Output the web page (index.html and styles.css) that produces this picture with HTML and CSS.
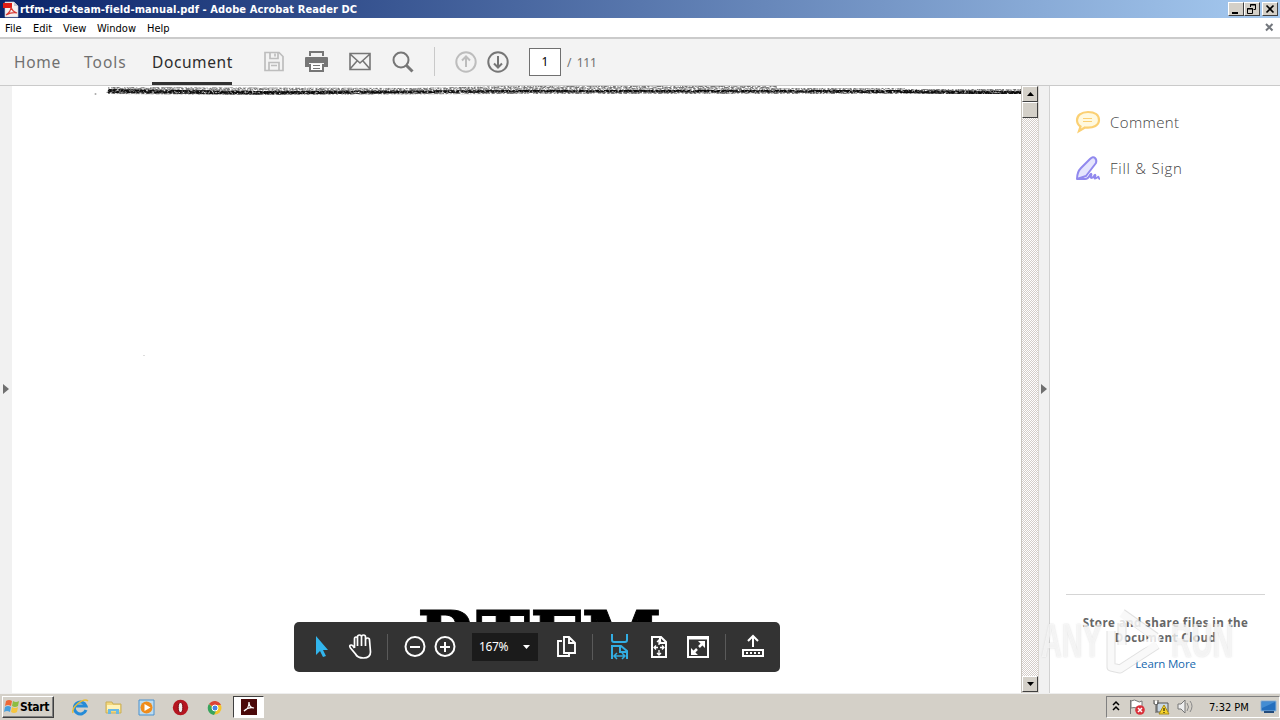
FILE: index.html
```html
<!DOCTYPE html>
<html lang="en">
<head>
<meta charset="utf-8">
<title>rtfm-red-team-field-manual.pdf - Adobe Acrobat Reader DC</title>
<link rel="stylesheet" href="styles.css">
</head>
<body>
<div class="screen">
  <header class="titlebar">
    <svg class="app-icon" width="18" height="17" viewBox="0 0 18 17"><path d="M4 1h9l4 4v11H4z" fill="#f4f0f0" stroke="#c9c9d4" stroke-width=".6"/><path d="M13 1v4h4z" fill="#c8c8d0"/><path d="M2 2h9v5H2z" fill="#e01d16"/><path d="M5 14c3-2 5-5 5-8 1 4 3 5 6 6-4-1-7 0-11 2z" fill="none" stroke="#d93a33" stroke-width="1.2"/></svg>
    <h1 class="title-text">rtfm-red-team-field-manual.pdf - Adobe Acrobat Reader DC</h1>
    <div class="window-buttons">
      <span class="win-btn"><svg width="14" height="12"><path d="M3 9h6v2H3z"/></svg></span>
      <span class="win-btn"><svg width="14" height="12"><path d="M5.500 4V1.500h5v5H8.500M5 2h6M2.500 5.500h5v5h-5zM2 6h6" fill="none" stroke="#000"/></svg></span>
      <span class="win-btn win-close"><svg width="14" height="12"><path d="M3.500 2.500l7 7M10.500 2.500l-7 7" stroke="#000" stroke-width="1.700"/></svg></span>
    </div>
  </header>
  <nav class="menubar">
    <span class="menu m-file">File</span><span class="menu m-edit">Edit</span><span class="menu m-view">View</span><span class="menu m-window">Window</span><span class="menu m-help">Help</span>
    <svg class="doc-close" width="9" height="9"><path d="M1 1l6.500 6.500M7.500 1L1 7.500" stroke="#73777d" stroke-width="2"/></svg>
  </nav>
  <div class="toolbar">
    <span class="tab t-home">Home</span><span class="tab t-tools">Tools</span><span class="tab t-doc">Document</span>
    <svg class="tools" width="250" height="44" viewBox="0 0 250 44" fill="none" stroke="#767676" stroke-width="2">
      <g stroke="#bdbdbd" stroke-width="1.700" transform="translate(2 -.5)"><path d="M3 13h14l4 4v14H3z"/><path d="M8 13v6h8v-6M13 14v3M7 31v-8h10v8M9 26h6"/></g>
      <g stroke="none"><path d="M49 11h15v5H49zM46 17h21q1 0 1 1v9h-4v-4H49v4h-4v-9q0-1 1-1z" fill="#767676"/><path d="M51 13h11v4H51z" fill="#f3f3f3"/><path d="M49 17h15v2H49zM49 24h15v8H49z" fill="#767676"/><path d="M51 24h11v6H51z" fill="#fff"/></g>
      <path d="M53 25.500h7M53 28.500h7" stroke-width="1"/>
      <path d="M90 13.500h20v16H90zM90 14l10 9 10-9M90 29l7-8M110 29l-7-8" stroke-width="1.600"/>
      <circle cx="141" cy="20" r="7.500"/><path d="M146.500 25.500l6 6" stroke-width="3"/>
      <path d="M174.500 7v29" stroke="#c9c9c9" stroke-width="1"/>
      <g stroke="#bdbdbd"><circle cx="206" cy="22" r="9.700"/><path d="M206 27V17M202 20.500l4-4 4 4"/></g>
      <circle cx="238" cy="22" r="9.700"/><path d="M238 16v11M234 23.500l4 4 4-4"/>
    </svg>
    <span class="page-input">1</span><span class="page-total">/&nbsp; 111</span>
  </div>
  <main class="workspace">
    <div class="left-rail"><svg width="8" height="12"><path d="M1 1l6 5-6 5z" fill="#707070"/></svg></div>
    <section class="document">
      <svg class="scan-edge" width="1009" height="12" viewBox="0 0 1009 12">
        <defs>
          <filter id="grain" x="0" y="0" width="1009" height="12" filterUnits="userSpaceOnUse"><feTurbulence type="fractalNoise" baseFrequency=".4 .5" numOctaves="3" seed="7"/><feColorMatrix values="0 0 0 0 0 0 0 0 0 0 0 0 0 0 0 3 0 0 0 -.7" result="n"/><feComposite in="SourceGraphic" in2="n" operator="in"/></filter>
          <filter id="grain-light" x="0" y="0" width="1009" height="12" filterUnits="userSpaceOnUse"><feTurbulence type="fractalNoise" baseFrequency=".5 .7" numOctaves="2" seed="3"/><feColorMatrix values="0 0 0 0 0 0 0 0 0 0 0 0 0 0 0 3 0 0 0 -.9" result="n"/><feComposite in="SourceGraphic" in2="n" operator="in"/></filter>
        </defs>
        <path d="M96 1L400 2 500 0H765V2H893V3L1009 3V8L890 8 500 8 245 9 96 8z" fill="#777" filter="url(#grain-light)"/>
        <path d="M97 3L245 5 500 4 760 4 893 4 1009 5V8L960 8 890 7 760 6.500 500 6.500 250 8.500 94 7z" fill="#080808" filter="url(#grain)"/>
        <circle cx="83.500" cy="8" r="1" fill="#aaa"/>
      </svg>
      <div class="cover-word">RTFM</div>
      <i class="speck"></i>
    </section>
    <div class="scrollbar"><span class="scroll-btn"><svg width="7" height="4"><path d="M0 4L3.500 0 7 4z"/></svg></span><span class="thumb"></span><span class="track"></span><span class="scroll-btn"><svg width="7" height="4"><path d="M0 0h7L3.500 4z"/></svg></span></div>
    <div class="right-rail"><svg width="8" height="12"><path d="M1 1l6 5-6 5z" fill="#707070"/></svg></div>
    <aside class="panel">
      <div class="action">
        <svg width="26" height="24" viewBox="0 0 26 24" fill="#fff9df" stroke="#fbd073" stroke-width="2.200"><path d="M13 2C6 2 2 5.500 2 10c0 3 1 5 3.500 6.500L4 21l6-3.500c9 1 14-2.500 14-7.500S20 2 13 2z"/><path d="M8 8.500h9M8 11.500h9" stroke-width="1"/></svg>
        <span>Comment</span>
      </div>
      <div class="action action-sign">
        <svg width="26" height="26" viewBox="0 0 26 26" fill="#e5e5fd" stroke="#9189ee" stroke-width="2" stroke-linejoin="round"><path d="M2 24q0-7 4-11l9-9q3-3 5-1t1 5L11 21z"/><path d="M2 24h8q3 0 5-4c1-2 2-1 1 1s1 3 3 0c1-2 2-1 1 1s0 2 3 0c1-1 0 2 2 2" fill="none"/></svg>
        <span class="sign-text">Fill &amp; Sign</span>
      </div>
      <div class="cloud"><p class="cloud-line line-one">Store and share files in the</p><p class="cloud-line line-two">Document Cloud</p><a class="learn">Learn More</a></div>
    </aside>
    <div class="dock">
      <svg width="178" height="50" viewBox="0 0 178 50" fill="none" stroke="#fff" stroke-width="2">
        <path d="M22 14v19l4-4 3 6 3-1-3-6h5z" fill="#32b5ed" stroke="none"/>
        <path d="M60 27v-9q0-2 1.500-2T63 18v7-9q0-2 2-2t2 2v9-9q0-2 2-2t2 2v9-6q0-2 2-2t2 2l1 12q0 6-7 6-6 0-8-4l-5-6q-2-3 1-3 1 0 3 3" transform="translate(.5 -1)" stroke-width="1.700"/>
        <path d="M93.500 12v26" stroke="#5a5a5a" stroke-width="1"/>
        <circle cx="121" cy="24.500" r="9.500"/><path d="M116 25h10"/><circle cx="151" cy="24.500" r="9.500"/><path d="M146 25h10M151 20v10"/>
      </svg>
      <span class="zoom-box"><span class="zoom-text">167%</span><svg width="7" height="4"><path d="M0 0h7L3.500 4z" fill="#fff"/></svg></span>
      <svg width="242" height="50" viewBox="0 0 242 50" fill="none" stroke="#fff" stroke-width="2">
        <path d="M26 15h5l6 6v10H26zM31 15v6h6M24 19h-4v15h11v-3" stroke-width="1.900"/>
        <path d="M54.500 12v26M187.500 12v26" stroke="#5a5a5a" stroke-width="1"/>
        <g stroke="#32aee3"><path d="M74 12v6q0 2 2 2h11q2 0 2-2v-6M74 37V24h9l6 5v8M82 24v6h7"/><path d="M76 34h11M79 31l-3 3 3 3M84 31l3 3-3 3" stroke-width="1.500"/></g>
        <path d="M114 15h9l5 5v15h-14zM122 15v6h6"/><path d="M121 18v5M121 28v5M116 25.500h4M122 25.500h4M119 20l2-2 2 2M119 31l2 2 2-2M118 23.500l-2 2 2 2M124 23.500l2 2-2 2" stroke-width="1.300"/>
        <path d="M150 15h20v20h-20z"/><path d="M150 16h20" stroke-width="3"/><path d="M161 25l5-5M159 27l-5 5" stroke-width="2.500"/><path d="M160 19h7v7zM153 26v7h7z" fill="#fff" stroke="none"/>
        <path d="M205 28h20v6h-20zM215 25V15M210 19l5-5 5 5"/><path d="M208 31h14" stroke-dasharray="2 2"/>
      </svg>
    </div>
    <div class="watermark"><span class="wm wm-any">ANY</span><svg width="62" height="66" viewBox="0 0 62 66" fill="none" stroke-linejoin="round"><g stroke="#b5b5b5" stroke-opacity=".4" stroke-width="9"><path d="M8 23v36l9 2 37-24M19 15v22M19 5l34 24"/></g><path d="M8 23v36l9 2 37-24M19 15v22M19 5l34 24M19 5v40l35-14z" stroke="#fff" stroke-opacity=".8" stroke-width="7"/></svg><span class="wm wm-run">RUN</span></div>
  </main>
  <footer class="taskbar">
    <div class="start"><svg width="17" height="17" viewBox="0 0 17 17"><path d="M3 3q3-2 6 0L8 8q-3-2-6 0z" fill="#ee6937"/><path d="M10 3q3 2 6 0l-1 5q-3 2-6 0z" fill="#8dbd42"/><path d="M2 9q3-2 6 0l-1 5q-3-2-6 0z" fill="#48a0de"/><path d="M9 9q3 2 6 0l-1 5q-3 2-6 0z" fill="#f6c53e"/></svg><b>Start</b></div>
    <svg class="quick" width="160" height="22" viewBox="0 0 160 22">
      <g fill="none" transform="translate(4 2)"><path d="M14 12A6 6 0 1 1 14 8H4" stroke="#258bd7" stroke-width="3"/><path d="M1 15C-1 9 12-1 16 3" stroke="#e9bd37" stroke-width="1.500"/></g>
      <g transform="translate(37 3)"><path d="M1 3h6l1 2h8v9H1z" fill="#f3d77b" stroke="#c9ae59"/><path d="M2 6h13v5H2z" fill="#fff3b8"/><path d="M3 15v-5h11v5h-3v-3H6v3z" fill="#69b9e3"/></g>
      <g transform="translate(70 3)"><path d="M1 1h15v15H1z" fill="#bddcf0" stroke="#4b91ce"/><circle cx="8.500" cy="8.500" r="6" fill="#ef8c1c"/><path d="M6.500 5l6 3.500-6 3.500z" fill="#fff"/></g>
      <g transform="translate(104 3)"><circle cx="8.500" cy="8.500" r="7.700" fill="#b51520"/><ellipse cx="8.500" cy="8.500" rx="2.300" ry="5" fill="#eee" stroke="#7a0710"/></g>
      <g transform="translate(139 3)"><circle cx="8" cy="9" r="6.500" fill="#f4c42d"/><path d="M8 9L2 5a7 7 0 0 1 12 1H8z" fill="#db4437"/><path d="M2 5a7 7 0 0 0 5 11l3-6-4-1z" fill="#38a45c"/><circle cx="8" cy="9" r="3" fill="#4584e5" stroke="#fff"/></g>
    </svg>
    <div class="active-task"><svg width="16" height="16"><path d="M0 0h16v16H0z" fill="#4b0909"/><path d="M3 12c3-1 5-5 5-9 0 4 2 6 5 6-4-1-7 0-10 3z" fill="none" stroke="#fff" stroke-width="1.200"/></svg></div>
    <div class="tray">
      <svg width="88" height="20" viewBox="0 0 88 20"><path d="M6 8l3-3 3 3M6 13l3-3 3 3" fill="none" stroke="#000" stroke-width="1.500"/>
        <path d="M23.500 3v14M24 4q4-2 6 0t5 0v8q-3 1-5-1-3-1-6 0z" fill="#fff" stroke="#777"/><circle cx="33" cy="13" r="4.800" fill="#d9303a"/><path d="M31 11l4 4M35 11l-4 4" stroke="#fff" stroke-width="1.500"/>
        <path d="M50 6h11v9H50z" fill="#c9d7e2" stroke="#555"/><path d="M47 3v4h4V3M49 7v9" fill="none" stroke="#555"/><path d="M48 4h2v3h-2z" fill="#fff"/><path d="M57 8l5 9H52z" fill="#f7d32a" stroke="#a98b13"/><path d="M57 11v3M57 15v1" stroke="#000"/>
        <path d="M71 7h3l4-4v13l-4-4h-3z" fill="#eee" stroke="#777"/><path d="M80 6q3 4 0 8M83 4q4 5 0 11" fill="none" stroke="#888"/></svg>
      <time>7:32 PM</time>
      <svg class="desk" width="17" height="14"><path d="M1 1h15v10H1z" fill="#246fbe" stroke="#8eb6da"/><path d="M2 2h13L2 8z" fill="#438dd3"/><path d="M4 12h10" stroke="#234b7b" stroke-width="2"/></svg>
    </div>
  </footer>
</div>
</body>
</html>
```
FILE: styles.css
```css
* { box-sizing: border-box; }
body { margin: 0; }
svg { display: block; flex: none; }
.screen { width: 1280px; height: 720px; overflow: hidden; display: grid; grid-template-rows: 18px 21px 47px 607px 27px; background: #fff; font-family: "DejaVu Sans Condensed", "DejaVu Sans", sans-serif; white-space: nowrap; }
.titlebar, .menubar, .taskbar { font-stretch: condensed; }
.titlebar { display: flex; align-items: center; background: linear-gradient(90deg, #0a246a, #a6caf0); }
.app-icon { margin-left: 1px; }
.title-text { margin: 0 auto 0 1px; font-size: 11px; line-height: 17px; font-weight: bold; color: #fff; letter-spacing: .1px; }
.window-buttons { display: flex; padding-right: 2px; }
.win-btn { width: 16px; height: 14px; background: #d4d0c8; border: 1px solid; border-color: #fff #404040 #404040 #fff; }
.win-close { margin-left: 2px; }
.menubar { display: flex; align-items: center; height: 21px; border-bottom: 2px solid #cbcbcb; padding: 0 6px 0 5px; font-size: 11px; }
.menu { padding-top: 1px; }
.m-file { width: 28px; } .m-edit { width: 30px; } .m-view { width: 34px; } .m-window { width: 50px; } .m-help { width: 30px; }
.doc-close { margin-left: auto; }
.toolbar { display: flex; align-items: center; background: #f3f3f3; border-bottom: 1px solid #cacaca; padding-left: 14px; font-family: "Noto Sans", sans-serif; }
.tab { font-size: 15.5px; color: #707070; letter-spacing: .75px; height: 46px; line-height: 46px; }
.t-home { width: 70px; } .t-tools { width: 68px; letter-spacing: 1px; }
.t-doc { width: 80px; color: #2c2c2c; border-bottom: 3px solid #323232; letter-spacing: .6px; }
.tools { margin: 1px 0 0 28px; align-self: flex-start; }
.page-input { margin-left: 19px; width: 32px; height: 28px; line-height: 26px; border: 1px solid #707070; background: #fff; text-align: center; font-size: 12px; }
.page-total { margin-left: 6px; font-size: 12px; color: #707070; letter-spacing: -.3px; }
.workspace { position: relative; display: grid; grid-template-columns: 12px 1009px 18px 11px 230px; }
.left-rail, .right-rail { background: #f1f1f1; display: flex; align-items: center; padding-bottom: 1px; }
.left-rail { padding-left: 2px; }
.right-rail { border-right: 1px solid #d2d2d2; padding-left: 1px; }
.document { position: relative; overflow: hidden; }
.cover-word { position: absolute; left: 405px; top: 506px; font: bold 82px/98px "DejaVu Serif", serif; color: #000; -webkit-text-stroke: 1px #000; transform-origin: left; transform: scaleX(.885); }
.speck { position: absolute; left: 131px; top: 269px; width: 2px; height: 1px; background: #ddd; }
.scrollbar { display: flex; flex-direction: column; background: #d9d5cf; border-left: 1px solid #c7c3bc; padding: 0 1px 1px 0; }
.scroll-btn, .thumb { height: 16px; flex: none; display: grid; place-items: center; background: #d4d0c8; border: 1px solid; border-color: #fff #404040 #404040 #fff; }
.track { flex: 1; background: repeating-conic-gradient(#d4cdc8 0 25%, #fff 0 50%) 0 0 / 2px 2px; }
.panel { display: flex; flex-direction: column; padding: 23px 15px 0 16px; font-family: "Open Sans", sans-serif; }
.action { display: flex; gap: 9px; align-items: center; height: 26px; padding-left: 9px; color: #444; font-size: 15px; font-weight: 300; letter-spacing: .4px; }
.action-sign { margin-top: 20px; }
.sign-text { letter-spacing: .75px; }
.cloud { margin-top: auto; height: 99px; border-top: 1px solid #d5d5d5; padding-top: 20px; text-align: center; color: #666; font-size: 11.5px; }
.cloud-line { margin: 0; line-height: 15px; font-weight: bold; letter-spacing: .42px; }
.learn { display: block; line-height: 22px; margin-top: 8px; color: #1767ad; letter-spacing: -.15px; }
.dock { position: absolute; left: 294px; top: 536px; width: 486px; height: 50px; display: flex; align-items: center; background: #333; border-radius: 5px; }
.zoom-box { width: 66px; height: 28px; background: #1b1b1b; display: flex; align-items: center; justify-content: space-between; padding: 0 8px 0 7px; color: #fff; font: 12px "Noto Sans", sans-serif; letter-spacing: -.4px; }
.zoom-text { margin-top: -2px; }
.watermark { position: absolute; left: 1041px; top: 522px; display: flex; align-items: center; }
.wm { width: 62px; font: bold 48px/60px "Liberation Sans", sans-serif; color: rgba(255,255,255,.7); text-shadow: 0 0 2px rgba(140,140,140,.35); transform-origin: left; transform: scaleX(.6); }
.wm-run { margin-left: 6px; }
.taskbar { display: flex; align-items: center; background: #d4d0c8; border-top: 1px solid #eee; padding: 0 0 1px 2px; }
.start { width: 52px; height: 22px; display: flex; align-items: center; border: 1px solid; border-color: #fff #404040 #404040 #fff; font-size: 12px; letter-spacing: -.3px; box-shadow: inset -1px -1px #808080; }
.quick { margin-left: 14px; }
.active-task { margin-left: 5px; width: 31px; height: 22px; background: #fff; border: 1px solid; border-color: #404040 #fff #fff #404040; display: grid; place-items: center; }
.tray { margin-left: auto; width: 174px; height: 22px; border: 1px solid; border-color: #808080 #fff #fff #808080; display: flex; align-items: center; font-size: 11px; }
.tray time { width: 50px; margin-left: 14px; padding-top: 1px; }
.desk { margin-left: 1px; }
```
